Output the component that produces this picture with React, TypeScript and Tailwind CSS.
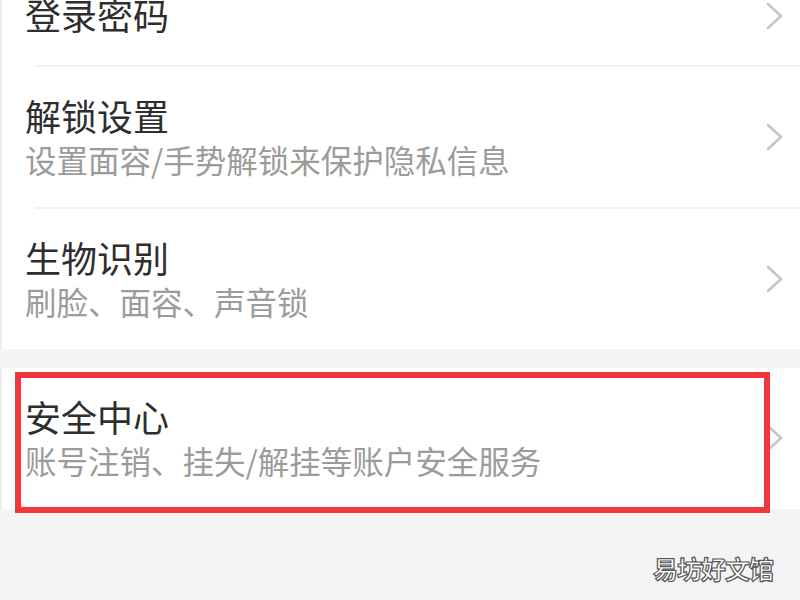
import React from "react";

interface Item {
    title: string;
    desc?: string;
}

const font = "font-['Noto_Sans_CJK_SC','Noto_Sans',sans-serif]";

function Chevron() {
    return (
        <svg width="18" height="28" viewBox="0 0 18 28" className="shrink-0 mr-[16px]">
            <path d="M2 2 L15 14 L2 26" fill="none" stroke="#c6c6c6" strokeWidth="2.6" strokeLinecap="round" strokeLinejoin="round" />
        </svg>
    );
}

function Row({ item }: { item: Item }) {
    return (
        <div className="flex items-center justify-between pl-[23px] pt-[26px] pb-[26px]">
            <div className="flex flex-col">
                <span className="text-[36px] leading-[44px] text-[#2e2e2e]">{item.title}</span>
                {item.desc && (
                    <span className="text-[31.5px] leading-[44px] text-[#9b9b9b]">{item.desc}</span>
                )}
            </div>
            <Chevron />
        </div>
    );
}

function Divider() {
    return <div className="h-[2px] ml-[33px] bg-[#f1f1f1]" />;
}

export default function App() {
    return (
        <div className={`w-[800px] h-[600px] overflow-hidden bg-[#f4f4f4] ${font} relative`}>
            {/* first group */}
            <div className="bg-white border-l-2 border-[#ececec] -mt-[33px]">
                <div className="h-[98px] flex items-center justify-between pl-[23px]">
                    <span className="text-[36px] leading-[44px] text-[#2e2e2e] -mt-[5px]">登录密码</span>
                    <Chevron />
                </div>
                <Divider />
                <Row item={{ title: "解锁设置", desc: "设置面容/手势解锁来保护隐私信息" }} />
                <Divider />
                <Row item={{ title: "生物识别", desc: "刷脸、面容、声音锁" }} />
            </div>

            {/* second group */}
            <div className="mt-[19px] bg-white border-l-2 border-[#ececec] relative">
                <div className="flex items-center justify-between pl-[23px] pt-[26px] pb-[27px]">
                    <div className="flex flex-col">
                        <span className="text-[36px] leading-[44px] text-[#2e2e2e]">安全中心</span>
                        <span className="text-[31.5px] leading-[44px] text-[#9b9b9b]">账号注销、挂失/解挂等账户安全服务</span>
                    </div>
                    <Chevron />
                </div>
                {/* annotation box */}
                <div className="absolute left-[13px] top-[4px] w-[755px] h-[141px] border-[6px] border-[#f2373c]" />
            </div>

            {/* watermark */}
            <div className="absolute right-[27px] bottom-[17px] text-[25px] leading-[30px] font-bold text-white [-webkit-text-stroke:1.2px_#555] tracking-[-1px]">
                易坊好文馆
            </div>
        </div>
    );
}
